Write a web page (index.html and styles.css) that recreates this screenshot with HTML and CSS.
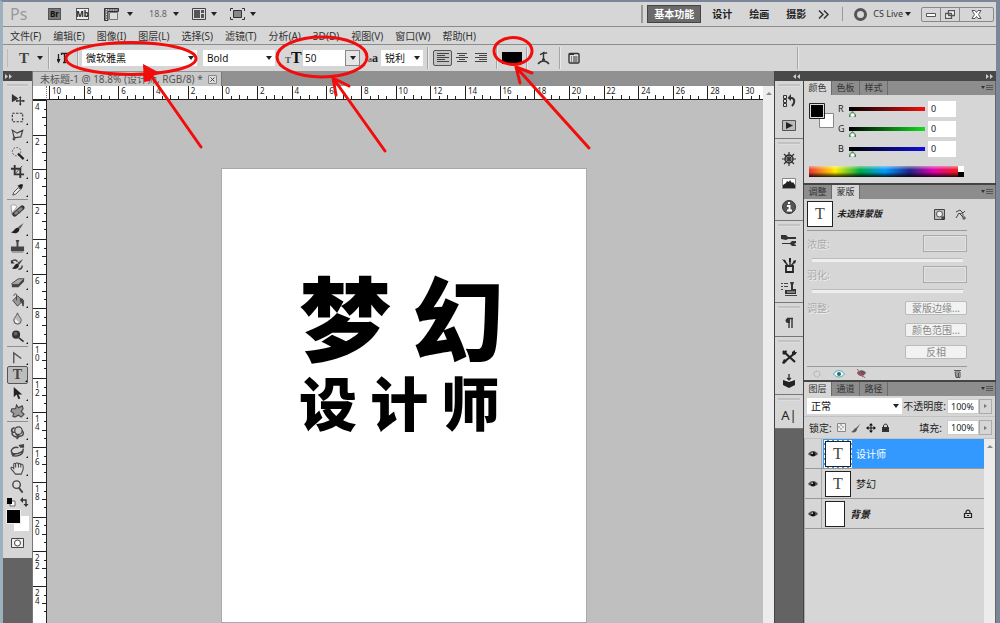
FILE: index.html
```
<!DOCTYPE html>
<html lang="zh-CN">
<head>
<meta charset="utf-8">
<title>未标题-1</title>
<link rel="stylesheet" href="styles.css">
</head>
<body>
<svg class="sprite" aria-hidden="true">
  <symbol id="move" viewBox="0 0 16 16"><path d="M2 2v9l7-4z" fill="#333"/><path d="M11 5v9M6.500 9.500h9" stroke="#333" stroke-width="1.300"/><path d="M9.500 6.500L11 4.500l1.500 2zM9.500 12.500l1.500 2 1.500-2zM13.500 8l2 1.500-2 1.500zM8 8L6 9.500 8 11z" fill="#333"/></symbol>
  <symbol id="marquee" viewBox="0 0 16 16"><rect x="2.500" y="3.500" width="11" height="9" fill="none" stroke="#333" stroke-width="1.200" stroke-dasharray="2.500 1.500"/></symbol>
  <symbol id="lasso" viewBox="0 0 16 16"><path d="M2.500 2.500l5 3 6-3-2 7-7 1zM5 10c-3 1-1 4 0 2s-1-2 0-3" fill="none" stroke="#444" stroke-width="1.300"/></symbol>
  <symbol id="wand" viewBox="0 0 16 16"><circle cx="7" cy="6" r="4.500" fill="none" stroke="#555" stroke-dasharray="2 1.400"/><path d="M8.500 8l6 6" stroke="#222" stroke-width="2.400"/></symbol>
  <symbol id="crop" viewBox="0 0 16 16"><path d="M5 1v10h10M1 5h10v10" fill="none" stroke="#333" stroke-width="2"/><path d="M5 11l8-9" stroke="#444"/></symbol>
  <symbol id="dropper" viewBox="0 0 16 16"><path d="M3 14l1-3 5-5 2 2-5 5z" fill="#eee" stroke="#444"/><path d="M8 4l4 4 1-2 1-3-2-1-2 1z" fill="#222"/></symbol>
  <symbol id="heal" viewBox="0 0 16 16"><path d="M1 3c2-2 6-1 6 1s-4 4-5 8z" fill="#fff" stroke="#999"/><path d="M5 12l8-7" stroke="#333" stroke-width="5" stroke-linecap="round"/><path d="M6 11l6-5" stroke="#888" stroke-width="3" stroke-linecap="round"/><path d="M7.500 8l3 3" stroke="#333"/></symbol>
  <symbol id="brush" viewBox="0 0 16 16"><path d="M14.500 2L9 6l2 2z" fill="#555"/><path d="M10 7C5 6 5 11 1 12c5 3 10 0 9-5z" fill="#222"/></symbol>
  <symbol id="stamp" viewBox="0 0 16 16"><path d="M6 1h4l-1 3v4h6v5H1V8h6V4z" fill="#444"/><path d="M2 14h12" stroke="#777"/></symbol>
  <symbol id="history" viewBox="0 0 16 16"><path d="M14 2L8 6l2 2z" fill="#444"/><path d="M9 7c-4-1-4 4-7 5 4 2 9 0 7-5z" fill="#222"/><path d="M2 5c2-3 5-2 6 0M13 9c0 3-2 4-4 4" fill="none" stroke="#444" stroke-width="1.600"/><path d="M1 3v4h4z" fill="#333"/></symbol>
  <symbol id="eraser" viewBox="0 0 16 16"><path d="M2 9l7-5h6l-6 6H2z" fill="#aaa" stroke="#444"/><path d="M2 10h7l6-6v3l-6 6H2z" fill="#444"/></symbol>
  <symbol id="bucket" viewBox="0 0 16 16"><path d="M3 8l5-5 6 5-6 6z" fill="#999" stroke="#444"/><path d="M7 8V2c0-2-3-1-3 1" fill="none" stroke="#444"/><path d="M11 6c4 0 4 3 3 8-1-2-1-5-3-5z" fill="#444" stroke="#444"/></symbol>
  <symbol id="drop" viewBox="0 0 16 16"><path d="M8 2c1 4 4 5 4 8a4 4 0 0 1-8 0c0-3 3-4 4-8z" fill="#bbb" stroke="#555"/><path d="M6 9c0 2 1 3 3 3" fill="none" stroke="#fff" stroke-width="1.500"/></symbol>
  <symbol id="dodge" viewBox="0 0 16 16"><circle cx="6.500" cy="6" r="4.300" fill="#333"/><circle cx="6" cy="5" r="2" fill="#666"/><path d="M9.500 9.500l5 4" stroke="#333" stroke-width="1.800"/></symbol>
  <symbol id="pen" viewBox="0 0 16 16"><path d="M4 14V3l8 6" fill="none" stroke="#555" stroke-width="1.500"/></symbol>
  <symbol id="arrow" viewBox="0 0 16 16"><path d="M4 1v11l3-3 2 5 2-1-2-4h4z" fill="#222"/></symbol>
  <symbol id="shape" viewBox="0 0 16 16"><path d="M7 1l2 3 4-2 1 3-2 3 3 3-3 3-3-2-4 2-2-1 1-3-3-2 1-3h4z" fill="#999" stroke="#444" stroke-width="1.200"/></symbol>
  <symbol id="rotate3d" viewBox="0 0 16 16"><circle cx="9" cy="6" r="4" fill="#ccc" stroke="#444" stroke-width="1.300"/><path d="M5 3C0 4 1 8 5 8M3 6c-3 5 3 8 7 6 5 0 5-4 3-6M6 10l4 2-3 3" fill="none" stroke="#444" stroke-width="1.500"/></symbol>
  <symbol id="orbit" viewBox="0 0 16 16"><path d="M9 5C3 3-1 9 3 11c5 2 12-2 11-5M4 14c5 0 9-1 10-5" fill="none" stroke="#444" stroke-width="1.500"/><path d="M9 2l6-1v4h-4zM1 11h6l-4 4z" fill="#444"/></symbol>
  <symbol id="hand" viewBox="0 0 16 16"><path d="M5 13C3 10 1 9 1 7.500s2-1 3 .5L4 4c0-2 2-2 2 0 0-3 3-3 3 0 0-2 2-2 2 0 0-1 3-1 3 1v4l-2 5H6zM6 4v3M9 4v3M11.500 4v3" fill="#ddd" stroke="#444" stroke-width="1.100"/></symbol>
  <symbol id="zoom" viewBox="0 0 16 16"><circle cx="7" cy="6" r="4" fill="#ddd" stroke="#444" stroke-width="1.500"/><path d="M9.500 9.500l4 5" stroke="#444" stroke-width="2"/></symbol>
  <symbol id="hist" viewBox="0 0 16 16"><path d="M2.500 2.500h3v3h-3zM2.500 6.500h3v3h-3zM2.500 10.500h3v3h-3z" fill="#ddd" stroke="#333"/><path d="M8 5h3c3 1 3 5 0 8" fill="none" stroke="#333" stroke-width="2"/><path d="M10 1v7L6.500 5z" fill="#333"/></symbol>
  <symbol id="play" viewBox="0 0 16 16"><path d="M1.500 3.500h13v10h-13z" fill="#bbb" stroke="#555"/><path d="M5 5v7l7-3.500z" fill="#222"/></symbol>
  <symbol id="wheel" viewBox="0 0 16 16"><circle cx="8" cy="8" r="4" fill="none" stroke="#333" stroke-width="1.500"/><path d="M8 1v14M1 8h14M3 3l10 10M13 3L3 13" stroke="#333" stroke-width="1.200"/></symbol>
  <symbol id="histogram" viewBox="0 0 16 16"><path d="M1.500 3.500h13v10h-13z" fill="#fff" stroke="#888"/><path d="M2 13v-3l3-2 1-2 2 1 1-2 2 3 1-1 2 3v3z" fill="#222"/></symbol>
  <symbol id="info" viewBox="0 0 16 16"><circle cx="8" cy="8" r="6.500" fill="#555" stroke="#333"/><path d="M8 3v2M6 7h2.500v4M6 11.500h5" stroke="#fff" stroke-width="2"/></symbol>
  <symbol id="presets" viewBox="0 0 16 16"><path d="M0 2l5 0 2 2h8v2H7L5 7 0 6zM1 10h8l2-2 4 0 0 2-2 1 2 1 0 1h-4l-2-2H1z" fill="#333"/></symbol>
  <symbol id="brushes" viewBox="0 0 16 16"><path d="M5 9h7v6H5z" fill="#ddd" stroke="#222" stroke-width="1.800"/><path d="M7 9L3 3M9 9V1M10 9l4-5" stroke="#333" stroke-width="1.500"/><path d="M1 2l4 2-1 2zM8 1h2v4H8zM12 4l3-1-1 4z" fill="#222"/></symbol>
  <symbol id="clone" viewBox="0 0 16 16"><path d="M9 1h4l-1 3v4h3v5H4V9h6V4z" fill="#333"/><path d="M0 2.500h2m1 0h4M0 5.500h2m1 0h4M0 8.500h2M4 14.500h12" stroke="#444"/><path d="M6 11h8" stroke="#ccc"/></symbol>
  <symbol id="para" viewBox="0 0 16 16"><path d="M8 3v10M11 3v10M6 3.500h6" stroke="#333" stroke-width="1.400"/><path d="M9 3C3 2 3 9 9 8z" fill="#333"/></symbol>
  <symbol id="tools" viewBox="0 0 16 16"><path d="M2 2l12 11M14 4L3 13" stroke="#222" stroke-width="2.200"/><path d="M1 4l4-3 1 2-3 3zM11 3l3-2v2h2l-2 3-3-1zM1 14l2-4 3 2-3 3z" fill="#222"/></symbol>
  <symbol id="box3d" viewBox="0 0 16 16"><path d="M2 7l6 2 6-2v5l-6 3-6-3z" fill="#222"/><path d="M4 7l4-2 4 2-4 1.500z" fill="#eee"/><path d="M8 1v6M6 5l2 2 2-2" fill="none" stroke="#333" stroke-width="1.400"/></symbol>
  <symbol id="menu" viewBox="0 0 12 8"><path d="M0 2h4L2 5z" fill="#333"/><path d="M5 1.500h7M5 3.500h7M5 5.500h7" stroke="#555"/></symbol>
  <symbol id="eye" viewBox="0 0 12 8"><path d="M0 4c3-5 9-5 12 0-3 4-9 4-12 0z" fill="#555"/><circle cx="6" cy="4" r="2.800" fill="#111"/><circle cx="5" cy="3" r="1" fill="#ddd"/></symbol>
  <symbol id="lock" viewBox="0 0 10 10"><path d="M1.500 4.500h7v4h-7zM3 4.500V3c0-2.500 4-2.500 4 0v1.500" fill="none" stroke="#222" stroke-width="1.200"/><path d="M4 6.500h2" stroke="#222"/></symbol>
  <symbol id="lines" viewBox="0 0 12 12"><path d="M0 1.500h12M0 3.500h8M0 5.500h12M0 7.500h8M0 9.500h12" stroke="#444"/></symbol>
  <symbol id="linesC" viewBox="0 0 12 12"><path d="M1 1.500h10M3 3.500h6M0 5.500h12M3 7.500h6M1 9.500h10" stroke="#444"/></symbol>
  <symbol id="linesR" viewBox="0 0 12 12"><path d="M0 1.500h12M4 3.500h8M0 5.500h12M4 7.500h8M0 9.500h12" stroke="#444"/></symbol>
</svg>

<div class="app">
  <header class="appbar">
    <span class="ps">Ps</span>
    <button class="launch br">Br</button>
    <button class="launch mb">Mb</button>
    <button class="drop"><svg width="15" height="13" viewBox="0 0 15 13"><path d="M.5.500h14v3H4v9H.5z" fill="#777" stroke="#333"/><path d="M2.500 1v12M4 2h10" stroke="#eee" stroke-dasharray="1 1.500"/><path d="M5.500 4.500h8v7h-8z" fill="#ddd" stroke="#777"/></svg></button>
    <button class="drop zoomlevel">18.8</button>
    <button class="drop arrange"><svg width="14" height="12" viewBox="0 0 14 12"><path d="M.5.500h13v11H.5z" fill="#ddd" stroke="#444"/><path d="M2 2h6v8H2zM9 2h3v3H9zM9 6h3v4H9z" fill="#555"/></svg></button>
    <button class="drop screen"><svg width="15" height="12" viewBox="0 0 15 12"><path d="M3.500 2.500h8v7h-8z" fill="#888" stroke="#333"/><path d="M.5 3V.500H3M12 .5h2.500V3M.5 9v2.500H3M12 11.500h2.500V9" fill="none" stroke="#333"/></svg></button>
    <nav class="spaces">
      <button class="space on">基本功能</button>
      <button class="space">设计</button>
      <button class="space">绘画</button>
      <button class="space">摄影</button>
      <button class="more" aria-label="更多"><svg width="12" height="9" viewBox="0 0 12 9"><path d="M1 .5l4 4-4 4M6 .5l4 4-4 4" fill="none" stroke="#333" stroke-width="1.500"/></svg></button>
    </nav>
    <button class="cslive"><i class="ring"></i>CS Live<i class="tri"></i></button>
    <div class="winbtns">
      <button aria-label="最小化"><svg width="10" height="8" viewBox="0 0 10 8"><path d="M.5 3.500h9v3h-9z" fill="#fff" stroke="#555"/></svg></button>
      <button aria-label="还原"><svg width="10" height="9" viewBox="0 0 10 9"><path d="M3.500.500h6v5h-6zM.5 3.500h6v5h-6z" fill="#fff" stroke="#555" stroke-width="1.300"/></svg></button>
      <button class="close" aria-label="关闭"><svg width="11" height="9" viewBox="0 0 11 9"><path d="M1 .5h3l1.500 2L7 .5h3L7.500 4.500l2.500 4H7l-1.500-2-1.500 2H1l2.500-4z" fill="#fff" stroke="#555"/></svg></button>
    </div>
  </header>

  <nav class="menubar">
    <button>文件(F)</button><button>编辑(E)</button><button>图像(I)</button><button>图层(L)</button><button>选择(S)</button><button>滤镜(T)</button><button>分析(A)</button><button>3D(D)</button><button>视图(V)</button><button>窗口(W)</button><button>帮助(H)</button>
  </nav>

  <div class="options">
    <i class="grip-v"></i>
    <button class="drop typetool">T</button>
    <i class="sep"></i>
    <button class="icon orient" aria-label="更改文本方向"><svg width="12" height="12" viewBox="0 0 12 12"><path d="M1.500 2v7M0 7l1.500 3L3 7M4 1.500h7M7.500 2v8M6 10.500h3M4.500 1v2M10.500 1v2" fill="none" stroke="#222" stroke-width="1.300"/></svg></button>
    <i class="sep"></i>
    <label class="pick font"><select aria-label="字体"><option>微软雅黑</option></select></label>
    <label class="pick style"><select aria-label="字形"><option>Bold</option></select></label>
    <label class="tt" for="size"><small>T</small>T</label>
    <div class="size"><input id="size" value="50"><button aria-label="字号列表"><i class="tri"></i></button></div>
    <label class="aa" for="aa">a<b>a</b></label>
    <label class="pick anti"><select id="aa"><option>锐利</option></select></label>
    <i class="sep"></i>
    <button class="align on" aria-label="左对齐"><svg width="12" height="12"><use href="#lines"/></svg></button>
    <button class="align" aria-label="居中"><svg width="12" height="12"><use href="#linesC"/></svg></button>
    <button class="align" aria-label="右对齐"><svg width="12" height="12"><use href="#linesR"/></svg></button>
    <i class="sep"></i>
    <button class="ink" aria-label="文本颜色"></button>
    <i class="sep"></i>
    <button class="icon warp" aria-label="变形文字"><svg width="13" height="14" viewBox="0 0 13 14"><path d="M3 3.500c2 0 3-2 4-2 0 1 2 1 3 0M6.500 2v7M5 8.500h3M1 13c3-4 8-4 11 0" fill="none" stroke="#333" stroke-width="1.400"/></svg></button>
    <i class="sep"></i>
    <button class="icon panelbtn" aria-label="字符面板"><svg width="12" height="12" viewBox="0 0 12 12"><rect x="1" y="1.500" width="10" height="9.500" rx="1" fill="#ddd" stroke="#333" stroke-width="1.400"/><path d="M1 2h5" stroke="#333" stroke-width="2"/><path d="M3 5h1m1 0h4.500M3 7h1m1 0h4.500M3 9h1m1 0h4.500" stroke="#333"/></svg></button>
    <i class="sep last"></i>
  </div>

  <main class="work">
    <aside class="toolbox">
      <div class="darkhead"><svg width="8" height="5" viewBox="0 0 8 5"><path d="M0 0l3 2.500L0 5zM4 0l3 2.500L4 5z" fill="#ccc"/></svg></div>
      <div class="tools">
        <i class="grip"></i>
        <div class="group">
          <button class="tool plain" aria-label="移动"><svg><use href="#move"/></svg></button>
          <button class="tool" aria-label="选框"><svg><use href="#marquee"/></svg></button>
          <button class="tool" aria-label="套索"><svg><use href="#lasso"/></svg></button>
          <button class="tool" aria-label="魔棒"><svg><use href="#wand"/></svg></button>
          <button class="tool" aria-label="裁剪"><svg><use href="#crop"/></svg></button>
          <button class="tool" aria-label="吸管"><svg><use href="#dropper"/></svg></button>
        </div>
        <div class="group">
          <button class="tool" aria-label="修复"><svg><use href="#heal"/></svg></button>
          <button class="tool" aria-label="画笔"><svg><use href="#brush"/></svg></button>
          <button class="tool" aria-label="图章"><svg><use href="#stamp"/></svg></button>
          <button class="tool" aria-label="历史画笔"><svg><use href="#history"/></svg></button>
          <button class="tool" aria-label="橡皮擦"><svg><use href="#eraser"/></svg></button>
          <button class="tool" aria-label="油漆桶"><svg><use href="#bucket"/></svg></button>
          <button class="tool" aria-label="模糊"><svg><use href="#drop"/></svg></button>
          <button class="tool" aria-label="减淡"><svg><use href="#dodge"/></svg></button>
        </div>
        <div class="group">
          <button class="tool" aria-label="钢笔"><svg><use href="#pen"/></svg></button>
          <button class="tool on">T</button>
          <button class="tool" aria-label="路径选择"><svg><use href="#arrow"/></svg></button>
          <button class="tool" aria-label="形状"><svg><use href="#shape"/></svg></button>
        </div>
        <div class="group">
          <button class="tool" aria-label="3D旋转"><svg><use href="#rotate3d"/></svg></button>
          <button class="tool" aria-label="3D相机"><svg><use href="#orbit"/></svg></button>
          <button class="tool" aria-label="抓手"><svg><use href="#hand"/></svg></button>
          <button class="tool plain" aria-label="缩放"><svg><use href="#zoom"/></svg></button>
        </div>
        <svg class="swatches" width="26" height="34" viewBox="0 0 26 34"><path d="M5 4h5v5H5z" fill="#fff" stroke="#666"/><path d="M2 1h5v6H2z" fill="#000"/><path d="M17 3h4v5" fill="none" stroke="#333" stroke-width="1.400"/><path d="M18 0v6l-3-3zM18.500 7h5L21 10z" fill="#333"/><path d="M9 19h15v15H9z" fill="#fff"/><path d="M1.500 12.500h14v14h-14z" fill="#000" stroke="#eee"/></svg>
        <button class="quick" aria-label="快速蒙版"><svg width="13" height="10" viewBox="0 0 13 10"><path d="M.5.500h12v9H.5z" fill="#eee" stroke="#444"/><circle cx="6.500" cy="5" r="3" fill="#fff" stroke="#444"/></svg></button>
      </div>
    </aside>

    <section class="doc">
      <div class="tabs"><div class="tab">未标题-1 @ 18.8% (设计师, RGB/8) *<button aria-label="关闭文档"><svg width="9" height="9" viewBox="0 0 9 9"><path d="M.5.500h8v8h-8z" fill="#ddd" stroke="#888"/><path d="M2.500 2.500l4 4M6.500 2.500l-4 4" stroke="#444"/></svg></button></div></div>
      <div class="view">
        <div class="corner"></div>
        <div class="hruler"><span>10</span><span>8</span><span>6</span><span>4</span><span>2</span><span>0</span><span>2</span><span>4</span><span>6</span><span>8</span><span>10</span><span>12</span><span>14</span><span>16</span><span>18</span><span>20</span><span>22</span><span>24</span><span>26</span><span>28</span><span>30</span></div>
        <div class="vruler"><span>4</span><span>2</span><span>0</span><span>2</span><span>4</span><span>6</span><span>8</span><span>10</span><span>12</span><span>14</span><span>16</span><span>18</span><span>20</span><span>22</span><span>24</span></div>
        <div class="canvas"><div class="paper"><p class="big">梦 幻</p><p class="sub">设 计 师</p></div></div>
        <div class="scroll"><i class="up"></i></div>
      </div>
    </section>

    <aside class="dock">
      <div class="darkhead"><svg width="8" height="5" viewBox="0 0 8 5"><path d="M3 0L0 2.500 3 5zM7 0L4 2.500 7 5z" fill="#ccc"/></svg><svg width="8" height="5" viewBox="0 0 8 5"><path d="M0 0l3 2.500L0 5zM4 0l3 2.500L4 5z" fill="#ccc"/></svg></div>
      <div class="dockbody">
        <div class="iconcol">
          <div class="igroup"><i class="grip"></i><button aria-label="历史记录"><svg><use href="#hist"/></svg></button><button aria-label="动作"><svg><use href="#play"/></svg></button></div>
          <div class="igroup"><i class="grip"></i><button aria-label="导航器"><svg><use href="#wheel"/></svg></button><button aria-label="直方图"><svg><use href="#histogram"/></svg></button><button aria-label="信息"><svg><use href="#info"/></svg></button></div>
          <div class="igroup"><i class="grip"></i><button aria-label="画笔预设"><svg><use href="#presets"/></svg></button><button aria-label="画笔面板"><svg><use href="#brushes"/></svg></button><button aria-label="仿制源"><svg><use href="#clone"/></svg></button></div>
          <div class="igroup"><i class="grip"></i><button aria-label="段落"><svg><use href="#para"/></svg></button></div>
          <div class="igroup"><i class="grip"></i><button aria-label="工具预设"><svg><use href="#tools"/></svg></button><button aria-label="3D"><svg><use href="#box3d"/></svg></button></div>
          <div class="igroup"><i class="grip"></i><button class="char">A|</button></div>
        </div>
        <div class="panels">
          <section class="panel">
            <div class="ptabs"><button class="on">颜色</button><button>色板</button><button>样式</button><svg width="12" height="8"><use href="#menu"/></svg></div>
            <div class="color">
              <div class="mixer">
                <svg class="fgbg" width="27" height="27" viewBox="0 0 27 27"><path d="M10.500 10.500h14v14h-14z" fill="#fff" stroke="#888"/><path d="M.5.500h15v15H.5z" fill="#ddd" stroke="#222"/><path d="M2 2h12v12H2z" fill="#000"/></svg>
                <div class="channels">
                  <label for="r">R</label><input type="range" class="red" value="0" aria-label="红"><input id="r" value="0">
                  <label for="g">G</label><input type="range" class="green" value="0" aria-label="绿"><input id="g" value="0">
                  <label for="b">B</label><input type="range" class="blue" value="0" aria-label="蓝"><input id="b" value="0">
                </div>
              </div>
              <div class="spectrum"><i></i></div>
            </div>
          </section>
          <section class="panel">
            <div class="ptabs"><button>调整</button><button class="on">蒙版</button><svg width="12" height="8"><use href="#menu"/></svg></div>
            <div class="mask">
              <div class="mhead"><span class="thumb">T</span><em>未选择蒙版</em>
                <button aria-label="像素蒙版"><svg width="12" height="11" viewBox="0 0 12 11"><path d="M.5.500h10v10H.5z" fill="#bbb" stroke="#444"/><circle cx="5.500" cy="5" r="3" fill="#eee" stroke="#555"/><path d="M9 7v4M7 9h4" stroke="#222"/></svg></button>
                <button aria-label="矢量蒙版"><svg width="12" height="11" viewBox="0 0 12 11"><path d="M1 3l4-2 3 3 2-2M1 9l3-5 4 4M5 5c3-2 4 1 2 3M9 7v4M7 9h4" fill="none" stroke="#444"/></svg></button></div>
              <div class="mrow"><label for="den">浓度:</label><input id="den" disabled></div>
              <i class="track"></i>
              <div class="mrow"><label for="fea">羽化:</label><input id="fea" disabled></div>
              <i class="track"></i>
              <div class="refine"><span>调整:</span><div><button disabled>蒙版边缘...</button><button disabled>颜色范围...</button><button disabled>反相</button></div></div>
              <div class="mfoot">
                <svg width="10" height="8" viewBox="0 0 10 8"><circle cx="5" cy="4" r="3" fill="none" stroke="#aaa" stroke-dasharray="2 1"/></svg>
                <svg width="12" height="8" viewBox="0 0 12 8"><path d="M.5 4c3-4.500 8-4.500 11 0-3 4-8 4-11 0z" fill="#eff" stroke="#5aa"/><circle cx="6" cy="4" r="2" fill="#367"/></svg>
                <svg width="11" height="9" viewBox="0 0 11 9"><path d="M1 4c3-4 7-3 9 0-3 4-7 4-9 0z" fill="#656"/><path d="M1 0l8 9M1 3l6 5" stroke="#b55"/></svg>
                <svg class="bin" width="9" height="9" viewBox="0 0 9 9"><path d="M1 1.500h7M2 3h5v5.500H3zM4 4v4M5.500 4v4" fill="none" stroke="#555"/></svg>
              </div>
            </div>
          </section>
          <section class="panel layers">
            <div class="ptabs"><button class="on">图层</button><button>通道</button><button>路径</button><svg width="12" height="8"><use href="#menu"/></svg></div>
            <div class="lrow"><label class="pick blend"><select aria-label="混合模式"><option>正常</option></select></label><label for="op">不透明度:</label><span class="pct"><input id="op" value="100%"><button aria-label="不透明度滑块"><i></i></button></span></div>
            <div class="lrow locks"><span>锁定:</span>
              <svg width="9" height="9" viewBox="0 0 9 9"><path d="M.5.500h8v8h-8z" fill="#eee" stroke="#888"/><path d="M3 1h2v2H3zM1 3h2v2H1zM5 3h2v2H5zM3 5h2v2H3z" fill="#bbb"/></svg>
              <svg width="10" height="10" viewBox="0 0 10 10"><path d="M9.500.500L5 5l1 1zM5 5C3 5 3 8 0 9c3 1 6 0 6-3z" fill="#555"/></svg>
              <svg width="10" height="10" viewBox="0 0 10 10"><path d="M5 1v8M1 5h8" stroke="#111"/><path d="M3 2.500L5 0l2 2.500zM3 7.500L5 10l2-2.500zM2.500 3L0 5l2.500 2zM7.500 3L10 5 7.500 7z" fill="#111"/></svg>
              <svg width="9" height="10" viewBox="0 0 9 10"><path d="M1 4h7v5H1z" fill="#333"/><path d="M2.500 4V3c0-2.500 4-2.500 4 0v1M3 6.500h3" fill="none" stroke="#222"/></svg>
              <label for="fill">填充:</label><span class="pct"><input id="fill" value="100%"><button aria-label="填充滑块"><i></i></button></span></div>
            <div class="list">
              <ul>
                <li class="on"><button class="vis" aria-label="可见"><svg width="10" height="8"><use href="#eye"/></svg></button><span class="thumb">T</span><span class="name">设计师</span></li>
                <li><button class="vis" aria-label="可见"><svg width="10" height="8"><use href="#eye"/></svg></button><span class="thumb">T</span><span class="name">梦幻</span></li>
                <li><button class="vis" aria-label="可见"><svg width="10" height="8"><use href="#eye"/></svg></button><span class="thumb page"></span><em class="name">背景</em><svg class="lk" width="10" height="10"><use href="#lock"/></svg></li>
              </ul>
              <div class="scroll"><i class="up"></i></div>
            </div>
          </section>
        </div>
      </div>
    </aside>
  </main>
  <svg class="marks" width="600" height="160" viewBox="0 0 600 160" aria-hidden="true">
    <g fill="none" stroke="#f20d0d" stroke-width="3" stroke-linecap="round">
      <ellipse cx="131" cy="58.500" rx="65" ry="16"/><ellipse cx="322" cy="57" rx="45" ry="20"/><ellipse cx="513" cy="51" rx="19" ry="13.500"/>
      <path d="M145 67l56 80M333 78l52 73M333 78l3 17M333 78l16 8M516 67l73 81M516 67l4 16M516 67l16 6"/>
    </g>
    <path d="M143 64l17 9-7 3-3 5-6 1z" fill="#f20d0d"/>
  </svg>
</div>
</body>
</html>
```

FILE: styles.css
```
* { box-sizing: border-box; }
html, body { height: 100%; }
body { margin: 0; overflow: hidden; font: 10px/14px "Noto Sans", "Noto Sans CJK SC", sans-serif; color: #222; background: #a9b6c8; }
button, input, select { font: inherit; color: inherit; margin: 0; padding: 0; border: 0; border-radius: 0; background: none; }
button { display: flex; align-items: center; justify-content: center; flex: none; white-space: nowrap; }
svg { display: block; flex: none; }
p, ul { margin: 0; padding: 0; list-style: none; }
.sprite { position: absolute; width: 0; height: 0; }
.app { position: relative; height: 100vh; display: flex; flex-direction: column; border: solid #7b8698; border-width: 2px 4px 0 3px; border-left-color: #9db0bd; }
.tri, .drop::after, .pick::after { content: ""; border: 3px solid transparent; border-top: 4px solid #222; border-bottom: 0; }

.appbar { height: 25px; flex: none; display: flex; align-items: center; background: #d6d6d6; border-bottom: 1px solid #8c8c8c; padding: 0 2px 0 7px; }
.ps { width: 38px; font-size: 16px; color: #999; }
.launch { width: 13px; height: 12px; font-size: 8px; font-weight: bold; border: 1px solid #555; margin-right: 15px; }
.br { background: #777; color: #111; }
.mb { background: #eee; }
.drop { gap: 8px; }
.drop::after { margin-right: 1px; }
.zoomlevel { margin-left: 15px; color: #666; font-size: 9px; gap: 6px; }
.arrange { margin-left: 12px; gap: 5px; }
.screen { margin-left: 12px; gap: 5px; }
.spaces { display: flex; align-items: center; margin-left: auto; border-left: 2px solid #999; padding-left: 4px; }
.space { height: 18px; padding: 0 6px; font-weight: bold; color: #222; }
.space.on { background: #6a6a6a; color: #fff; border: 1px solid #444; margin-right: 5px; }
.space + .space { margin-right: 5px; }
.space:not(.on) { width: 32px; }
.more { margin: 0 12px 0 1px; }
.cslive { border-left: 1px solid #999; height: 14px; padding-left: 11px; color: #333; margin-right: 10px; font-size: 9px; }
.cslive .tri { margin-left: 2px; }
.ring { width: 13px; height: 13px; border: 3px solid #555; border-radius: 50%; margin-right: 6px; }
.winbtns { display: flex; border: 1px solid #888; border-radius: 2px; height: 15px; }
.winbtns button { width: 19px; border-right: 1px solid #888; }
.winbtns .close { width: 33px; border: 0; }

.menubar { height: 18px; flex: none; display: flex; align-items: center; gap: 12px; padding-left: 7px; background: #d6d6d6; border-bottom: 1px solid #8c8c8c; color: #333; }

.options { height: 26px; flex: none; display: flex; align-items: center; background: #d6d6d6; padding-left: 4px; }
.sep { width: 2px; height: 22px; border-left: 1px solid #a5a5a5; border-right: 1px solid #e8e8e8; flex: none; }
.grip-v { width: 2px; height: 18px; border-left: 1px solid #bbb; }
.typetool { font: bold 15px "Liberation Serif", serif; margin: 0 4px 0 10px; color: #444; }
.orient { margin: 0 8px 0 7px; }
.pick { position: relative; display: flex; align-items: center; height: 16px; background: #fff; flex: none; }
.pick select { appearance: none; width: 100%; height: 16px; padding-left: 4px; color: #111; }
.pick::after { position: absolute; right: 3px; pointer-events: none; }
.font { width: 115px; margin-left: 3px; }
.style { width: 72px; margin-left: 6px; }
.tt { font: bold 16px "Liberation Serif", serif; color: #111; width: 18px; margin-left: 10px; white-space: nowrap; }
.tt small { font-size: 9px; color: #555; }
.size { display: flex; background: #fff; height: 16px; flex: none; }
.size input { width: 42px; padding-left: 2px; }
.size button { width: 15px; background: #e6e6e6; border: 1px solid #888; }
.aa { font: 9px "Liberation Serif", serif; margin-left: 8px; width: 13px; }
.aa b { font-size: 12px; }
.anti { width: 42px; margin-right: 4px; }
.align { width: 19px; height: 16px; }
.align.on { border: 1px solid #555; border-radius: 2px; background: #c4c4c4; margin-left: 4px; }
.align + .sep { margin: 0 4px 0 6px; }
.ink { width: 20px; height: 12px; background: #000; margin-right: 4px; }
.warp { margin: 0 9px; }
.panelbtn { margin-left: 7px; }
.last { margin-left: auto; margin-right: 197px; }

.work { flex: 1; min-height: 0; display: flex; background: #636363; }
.darkhead { height: 10px; background: #484848; display: flex; align-items: center; padding: 0 2px; flex: none; }
.toolbox { width: 30px; flex: none; border-right: 1px solid #777; }
.tools { background: #d6d6d6; padding: 3px 4px 10px; }
.grip { display: block; height: 3px; background: #c2c2c2; border-bottom: 1px solid #ddd; margin-bottom: 2px; }
.tools .grip { margin-bottom: 3px; }
.group { border-bottom: 1px solid #8f8f8f; padding-bottom: 1px; margin-bottom: 1px; }
.group:nth-last-of-type(1) { border: 0; margin: 0; padding: 0; }
.tool { position: relative; width: 21px; height: 18px; }
.tool svg { width: 15px; height: 15px; }
.tool::after { content: ""; position: absolute; right: 0; bottom: 1px; border: 1px solid #111; border-top-color: transparent; border-left-color: transparent; }
.tool.plain::after { display: none; }
.tool.on { border: 1px solid #555; border-radius: 2px; background: #bdbdbd; font: bold 14px "Liberation Serif", serif; color: #444; }
.swatches { margin-top: 2px; margin-left: -2px; }
.quick { margin: 7px 0 0 4px; }

.doc { flex: 1; min-width: 0; display: flex; flex-direction: column; background: #bfbfbf; }
.tabs { height: 15px; background: #919191; display: flex; padding-top: 1px; flex: none; }
.tab { display: flex; align-items: center; gap: 5px; background: #c9c9c9; border-right: 1px solid #777; padding: 0 4px 0 7px; color: #555; white-space: nowrap; }
.view { flex: 1; min-height: 0; display: grid; grid-template: 14px 1fr / 14px 1fr 11px; }
.corner { background: #fff; border-right: 1px dotted #777; border-bottom: 1px solid #222; }
.hruler, .vruler { background: #fff; display: flex; overflow: hidden; font-size: 8px; line-height: 8px; color: #222; }
.hruler { border-bottom: 1px solid #222; padding-left: 2px; }
.hruler span { flex: 0 0 calc(100% / 20.6); border-left: 1px solid #222; padding: 1px 0 0 2px; background: linear-gradient(#222, #222) 24% 100% / 1px 3px no-repeat, linear-gradient(#222, #222) 49% 100% / 1px 4px no-repeat, linear-gradient(#222, #222) 74% 100% / 1px 3px no-repeat; }
.vruler { grid-area: 2 / 1; flex-direction: column; border-right: 1px solid #222; }
.vruler span { flex: 0 0 calc(100% / 15.06); border-top: 1px solid #222; padding: 2px 6px 0 2px; word-break: break-all; width: 13px; background: linear-gradient(#222, #222) 100% 24% / 2px 1px no-repeat, linear-gradient(#222, #222) 100% 49% / 4px 1px no-repeat, linear-gradient(#222, #222) 100% 74% / 2px 1px no-repeat; }
.canvas { padding-top: 68px; overflow: hidden; }
.paper { width: 366px; height: 100%; margin-left: 174px; padding: 90px 0 0 77px; background: #fff; border: 1px solid #aaa; color: #000; font-family: "Noto Sans CJK SC", sans-serif; font-weight: 900; white-space: nowrap; }
.big { font-size: 92px; line-height: 112px; }
.sub { font-size: 58px; line-height: 60px; }
.scroll { background: #ececec; width: 11px; flex: none; }
.view .scroll { grid-area: 1 / 3 / 3 / 4; }
.up { display: block; margin: 6px auto 0; width: 6px; border: 3px solid transparent; border-top: 0; border-bottom: 3px solid #888; }

.dock { width: 222px; flex: none; display: flex; flex-direction: column; border-left: 1px solid #444; }
.dock .darkhead { padding: 0 2px 0 18px; justify-content: space-between; }
.dockbody { flex: 1; min-height: 0; display: flex; }
.iconcol { width: 29px; flex: none; border-right: 1px solid #444; }
.igroup { background: #d6d6d6; padding: 3px 3px 1px; border-bottom: 1px solid #777; }
.igroup button { width: 22px; height: 24px; }
.igroup svg { width: 16px; height: 16px; }
.igroup .char { font-size: 13px; }
.panels { flex: 1; min-width: 0; display: flex; flex-direction: column; gap: 2px; background: #444; }
.panel { background: #d6d6d6; border-right: 1px solid #666; }
.layers { flex: 1; }
.ptabs { height: 14px; background: #8d8d8d; display: flex; align-items: center; font-size: 9px; line-height: 12px; color: #333; }
.ptabs button { width: 28px; height: 14px; border-right: 1px solid #6b6b6b; }
.ptabs .on { background: #d6d6d6; }
.ptabs svg { margin: 0 2px 0 auto; }
.color { padding: 6px 5px 6px; }
.mixer { display: flex; gap: 2px; }
.fgbg { margin-top: 2px; }
.channels { display: grid; grid-template-columns: 8px 76px 28px; column-gap: 3px; row-gap: 4px; align-items: center; font-size: 9px; }
.channels input { background: #fff; width: 28px; height: 16px; padding: 0 0 2px 3px; }
.channels input[type=range] { appearance: none; width: 76px; height: 14px; padding: 0; background: none; }
input[type=range]::-webkit-slider-runnable-track { height: 4px; }
.red::-webkit-slider-runnable-track { background: linear-gradient(90deg, #000, #f01010); }
.green::-webkit-slider-runnable-track { background: linear-gradient(90deg, #000, #10e020); }
.blue::-webkit-slider-runnable-track { background: linear-gradient(90deg, #000, #1010e0); }
input[type=range]::-webkit-slider-thumb { appearance: none; width: 7px; height: 6px; margin-top: 4px; background: radial-gradient(circle at 50% 70%, #fff 1px, #485 3px); clip-path: polygon(50% 0, 100% 60%, 100% 100%, 0 100%, 0 60%); }
.spectrum { width: 155px; height: 11px; margin-top: 9px; display: flex; justify-content: flex-end; background: linear-gradient(rgba(255,255,255,.5), transparent 35%, transparent 55%, rgba(0,0,0,.85)), linear-gradient(90deg, #e33, #fe0 17%, #0a4 33%, #09f 49%, #228 65%, #d0a 80%, #f01a1a 96%); }
.spectrum i { width: 6px; background: linear-gradient(#fff 50%, #000 50%); }
.mask { padding: 2px 28px 0 3px; height: 181px; color: #aaa; }
.mhead { display: flex; align-items: center; gap: 9px; padding-bottom: 3px; border-bottom: 1px solid #999; margin-bottom: 4px; }
.mhead em { margin-right: auto; margin-left: -5px; font-weight: bold; font-size: 9px; color: #222; }
.thumb { width: 26px; height: 26px; flex: none; display: grid; place-items: center; background: #fff; border: 1px solid #222; font: 16px "Liberation Serif", serif; color: #444; }
.mrow { display: flex; justify-content: space-between; align-items: center; text-shadow: 1px 1px #eee; }
.mrow input { width: 44px; height: 17px; border: 1px solid #aaa; outline: 1px solid #e2e2e2; outline-offset: -2px; }
.track { display: block; height: 4px; margin: 6px 4px 4px 5px; background: #eee; border-top: 1px solid #bbb; }
.refine { display: flex; justify-content: space-between; margin-top: 8px; text-shadow: 1px 1px #eee; }
.refine div { display: grid; gap: 8px; }
.refine button { width: 62px; height: 14px; background: #f2f2f2; border: 1px solid #bbb; border-radius: 2px; color: #888; }
.mfoot { display: flex; align-items: center; gap: 11px; border-top: 1px solid #999; margin-top: 7px; padding: 2px 5px; }
.bin { margin-left: auto; }
.lrow { height: 21px; display: flex; align-items: center; justify-content: space-between; padding: 0 3px; border-bottom: 1px solid #c2c2c2; white-space: nowrap; }
.locks { gap: 5px; justify-content: flex-start; padding-left: 5px; height: 22px; }
.locks label { margin-left: auto; }
.blend { width: 95px; }
.pct { display: flex; }
.pct input { width: 32px; height: 15px; background: #fff; padding-left: 3px; border: 1px solid #ccc; font-size: 9px; }
.pct button { width: 13px; height: 15px; border: 1px solid #aaa; }
.pct i { border: 2px solid transparent; border-left: 3px solid #777; border-right: 0; }
.list { display: flex; flex: 1; min-height: 0; }
.layers { display: flex; flex-direction: column; }
.list ul { flex: 1; border-left: 1px solid #aaa; }
.list li { display: flex; align-items: center; height: 30px; border-bottom: 1px solid #999; background: #d6d6d6; }
.list li.on { background: linear-gradient(90deg, #d6d6d6 18px, #39f 18px); color: #fff; }
.list li.on .thumb { outline: 1px dashed #fff; }
.vis { width: 17px; height: 29px; border-right: 1px solid #aaa; margin-right: 3px; }
.name { margin-left: 5px; }
em.name { font-weight: bold; }
.page { width: 20px; }
.lk { margin: 0 11px 0 auto; }
.marks { position: absolute; left: -3px; top: -2px; pointer-events: none; }
```
